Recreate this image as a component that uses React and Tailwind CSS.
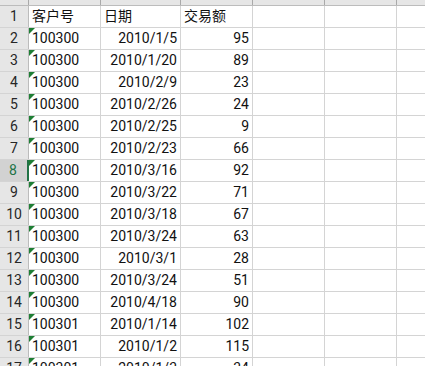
import React from 'react';

const rows = [
    ['客户号', '日期', '交易额', true],
    ['100300', '2010/1/5', '95'],
    ['100300', '2010/1/20', '89'],
    ['100300', '2010/2/9', '23'],
    ['100300', '2010/2/26', '24'],
    ['100300', '2010/2/25', '9'],
    ['100300', '2010/2/23', '66'],
    ['100300', '2010/3/16', '92'],
    ['100300', '2010/3/22', '71'],
    ['100300', '2010/3/18', '67'],
    ['100300', '2010/3/24', '63'],
    ['100300', '2010/3/1', '28'],
    ['100300', '2010/3/24', '51'],
    ['100300', '2010/4/18', '90'],
    ['100301', '2010/1/14', '102'],
    ['100301', '2010/1/2', '115'],
    ['100301', '2010/1/3', '34'],
];

const cell = 'h-full border-r border-[#d4d4d4] shrink-0';

export default function App() {
    return (
        <div
            className="w-[425px] h-[366px] overflow-hidden bg-white text-[14px] leading-[21px] text-[#111]"
            style={{ fontFamily: 'Roboto, "Noto Sans CJK SC", sans-serif' }}
        >
            {/* Column header strip (scrolled off) */}
            <div className="flex h-[6px] bg-[#e6e6e6] border-b border-[#bcbcbc]">
                <div className="w-[29px] h-full border-r border-[#a9a9a9] shrink-0" />
                <div className="w-[72px] h-full border-r border-[#a9a9a9] shrink-0" />
                <div className="w-[80px] h-full border-r border-[#a9a9a9] shrink-0" />
                <div className="w-[72px] h-full border-r border-[#a9a9a9] shrink-0" />
                <div className="w-[72px] h-full border-r border-[#a9a9a9] shrink-0" />
                <div className="w-[72px] h-full border-r border-[#a9a9a9] shrink-0" />
                <div className="flex-1" />
            </div>

            {rows.map(([a, b, c, isHead], i) => {
                const selected = i === 7;
                return (
                    <div key={i} className="flex h-[22px] border-b border-[#d4d4d4]">
                        <div
                            className={
                                selected
                                    ? 'w-[29px] h-full shrink-0 bg-[#d2d2d2] text-[#217346] text-center pr-[1px] border-r-2 border-[#217346]'
                                    : 'w-[29px] h-full shrink-0 bg-[#e6e6e6] text-[#262626] text-center border-r border-[#bcbcbc]'
                            }
                        >
                            {i + 1}
                        </div>
                        <div className={`${cell} w-[72px] relative pl-[3px]`}>
                            {!isHead && (
                                <span className="absolute left-0 top-0 w-0 h-0 border-t-[6px] border-r-[6px] border-t-[#1e7e34] border-r-transparent" />
                            )}
                            {a}
                        </div>
                        <div className={`${cell} w-[80px] pr-[3px] ${isHead ? 'text-left pl-[3px]' : 'text-right'}`}>
                            {b}
                        </div>
                        <div className={`${cell} w-[72px] pr-[3px] ${isHead ? 'text-left pl-[3px]' : 'text-right'}`}>
                            {c}
                        </div>
                        <div className={`${cell} w-[72px]`} />
                        <div className={`${cell} w-[72px]`} />
                        <div className="flex-1" />
                    </div>
                );
            })}
        </div>
    );
}
